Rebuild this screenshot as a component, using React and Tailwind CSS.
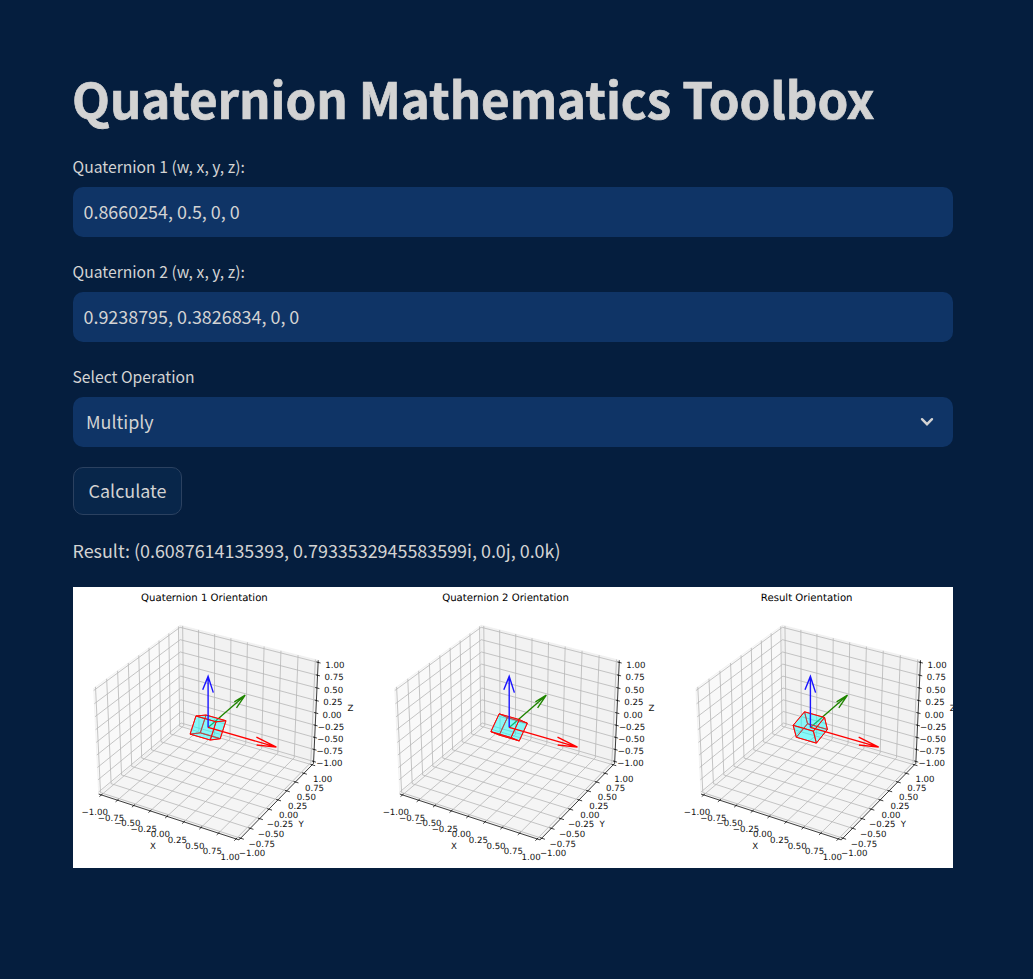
import React from "react";

const SCALE = 135;
const EDGE = 25 / 24;
const TICKS = [-1, -0.75, -0.5, -0.25, 0, 0.25, 0.5, 0.75, 1];

/* Perspective view: elevation 30, azimuth -60, box aspect 4:4:3 */
function project([x, y, z]) {
  const X = x * 0.5714;
  const Y = y * 0.5714;
  const Z = z * 0.4286;
  const w = 10 - (0.433 * X - 0.75 * Y + 0.5 * Z);
  const u = (0.866 * X + 0.5 * Y) * 10;
  const v = (-0.25 * X + 0.433 * Y + 0.866 * Z) * 10;
  return [(SCALE * u) / w, (-SCALE * v) / w];
}

const pts = (list) =>
  list.map((p) => project(p).map((n) => n.toFixed(2)).join(",")).join(" ");

const E = EDGE;
const X_LABELS = [
  [-113.4, 85.1], [-97.1, 90.7], [-80.8, 96.2], [-64.4, 101.8], [-47.8, 107.3],
  [-30.8, 113], [-13.2, 118.7], [4.2, 124.3], [22, 129.8],
];
const Y_LABELS = [
  [43.9, 126.6], [53.6, 116.7], [62.9, 107], [71.9, 97.3], [80.6, 88],
  [89.6, 78.8], [98.2, 69.7], [106.4, 61], [114.6, 52.3],
];
const Z_LABELS = [
  [121.3, 36.3], [121.7, 24.2], [122.3, 12.1], [122.9, -0.1], [123.9, -12.4],
  [124.7, -24.7], [125.5, -37.2], [126, -49.8], [126.7, -62.4],
];

const label = (v) => (v < 0 ? "\u2212" : "") + Math.abs(v).toFixed(2);

function Labels({ points }) {
  return points.map(([x, y], i) => (
    <text key={i} x={x} y={y + 2.5} textAnchor="middle">
      {label(TICKS[i])}
    </text>
  ));
}

function cubeFaces(angle) {
  const h = 0.15;
  const c = Math.cos(angle);
  const s = Math.sin(angle);
  const at = (x, y, z) => [x * h, (y * c - z * s) * h, (y * s + z * c) * h];
  const quad = [[-1, -1], [1, -1], [1, 1], [-1, 1]];
  const faces = [];
  for (const k of [-1, 1]) {
    faces.push(quad.map(([a, b]) => at(k, a, b)));
    faces.push(quad.map(([a, b]) => at(a, k, b)));
    faces.push(quad.map(([a, b]) => at(a, b, k)));
  }
  const depth = (f) =>
    f.reduce((t, [x, y, z]) => t + 0.2474 * x - 0.4286 * y + 0.2143 * z, 0);
  return faces.sort((a, b) => depth(a) - depth(b));
}

function Plot({ title, cx, angle }) {
  return (
    <g transform={`translate(${cx} 140.4)`}>
      <text x="-3.7" y="-126.6" textAnchor="middle" fontSize="10.15">
        {title}
      </text>

      <g stroke="#ededed" strokeWidth="0.6">
        <polygon fill="#f9f9f9" points={pts([[-E, -E, -E], [-E, E, -E], [-E, E, E], [-E, -E, E]])} />
        <polygon fill="#f2f2f2" points={pts([[-E, E, -E], [E, E, -E], [E, E, E], [-E, E, E]])} />
        <polygon fill="#f5f5f5" points={pts([[-E, -E, -E], [E, -E, -E], [E, E, -E], [-E, E, -E]])} />
      </g>

      <g fill="none" stroke="#b6b6b6" strokeWidth="0.8">
        {TICKS.map((t) => (
          <React.Fragment key={t}>
            <polyline points={pts([[t, -E, -E], [t, E, -E], [t, E, E]])} />
            <polyline points={pts([[E, t, -E], [-E, t, -E], [-E, t, E]])} />
            <polyline points={pts([[-E, -E, t], [-E, E, t], [E, E, t]])} />
          </React.Fragment>
        ))}
      </g>

      <g fill="none" stroke="#000000" strokeWidth="0.75">
        <polyline points={pts([[-E, -E, -E], [E, -E, -E]])} />
        <polyline points={pts([[E, -E, -E], [E, E, -E]])} />
        <polyline points={pts([[E, E, -E], [E, E, E]])} />
        {TICKS.map((t) => (
          <React.Fragment key={t}>
            <polyline points={pts([[t, -E - 0.045, -E], [t, -E + 0.025, -E]])} />
            <polyline points={pts([[E + 0.045, t, -E], [E - 0.025, t, -E]])} />
            <polyline points={pts([[E + 0.035, E, t], [E - 0.025, E, t]])} />
          </React.Fragment>
        ))}
      </g>

      <g fontSize="8.6" fill="#111111">
        <Labels points={X_LABELS} />
        <Labels points={Y_LABELS} />
        <Labels points={Z_LABELS} />
        <text x="-55.2" y="121.6" textAnchor="middle">X</text>
        <text x="93" y="99.4" textAnchor="middle">Y</text>
        <text x="142.3" y="-16.4" textAnchor="middle">Z</text>
      </g>

      <path d="M0 0L37.1 -32.2M26.2 -25.6L37.1 -32.2L28.4 -19.5" fill="none" stroke="#1f8500" strokeWidth="1.35" />
      <g fill="#00ffff" fillOpacity="0.25" stroke="#ff0000" strokeWidth="0.9" strokeLinejoin="round">
        {cubeFaces(angle).map((f, i) => (
          <polygon key={i} points={pts(f)} />
        ))}
      </g>
      <path d="M0 0V-51M-5.4 -37.6L0 -51L5.2 -34.8" fill="none" stroke="#1a14ff" strokeWidth="1.4" />
      <path d="M0 0L68.3 19.7M48.3 9.8L68.3 19.7L48.5 17.6" fill="none" stroke="#ff0000" strokeWidth="1.35" />
    </g>
  );
}

function Field({ label: name, children }) {
  return (
    <div className="flex flex-col">
      <div className="mb-[5px] -ml-[0.5px] h-[30px] text-[15.7px] leading-[30px]">{name}</div>
      {children}
    </div>
  );
}

export default function App() {
  return (
    <main className="h-[979px] w-full overflow-hidden bg-[#051e3e] pt-[60px] pr-20 pl-[73px] font-['Noto_Sans_CJK_SC',sans-serif] text-[17.92px] text-[#d3d3d3]">
      <h1 className="-ml-px h-[92px] text-[49.3px] leading-[75px] font-bold tracking-[-0.08px] whitespace-nowrap [-webkit-text-stroke:0.7px_#d3d3d3]">
        Quaternion Mathematics Toolbox
      </h1>

      <div className="flex flex-col gap-5">
        <Field label="Quaternion 1 (w, x, y, z):">
          <input
            className="h-[50px] w-full rounded-[10px] bg-[#0f3466] px-[10.5px] pb-[2px] outline-none"
            defaultValue="0.8660254, 0.5, 0, 0"
          />
        </Field>
        <Field label="Quaternion 2 (w, x, y, z):">
          <input
            className="h-[50px] w-full rounded-[10px] bg-[#0f3466] px-[10.5px] pb-[2px] outline-none"
            defaultValue="0.9238795, 0.3826834, 0, 0"
          />
        </Field>
        <Field label="Select Operation">
          <div className="flex h-[50px] items-center justify-between rounded-[10px] bg-[#0f3466] pr-[19px] pl-[13px]">
            <span className="pb-[2px]">Multiply</span>
            <svg width="14" height="10" viewBox="0 0 14 10" fill="none">
              <path d="M2 2.2L7 7.2L12 2.2" stroke="#d3d3d3" strokeWidth="2.4" strokeLinecap="round" />
            </svg>
          </div>
        </Field>
        <button className="h-12 w-[109px] rounded-[10px] border border-[#2b4160] bg-[#08264a] pb-[2px]">
          Calculate
        </button>
        <p className="-ml-[0.5px] h-8 leading-[30px]">
          Result: (0.6087614135393, 0.7933532945583599i, 0.0j, 0.0k)
        </p>
      </div>

      <svg
        className="mt-5 block bg-white font-['DejaVu_Sans',sans-serif]"
        width="880"
        height="281"
        viewBox="0 0 880 281"
        textRendering="geometricPrecision"
      >
        <Plot title="Quaternion 1 Orientation" cx={135.1} angle={Math.PI / 3} />
        <Plot title="Quaternion 2 Orientation" cx={436.2} angle={Math.PI / 4} />
        <Plot title="Result Orientation" cx={737.4} angle={(Math.PI * 7) / 12} />
      </svg>
    </main>
  );
}
